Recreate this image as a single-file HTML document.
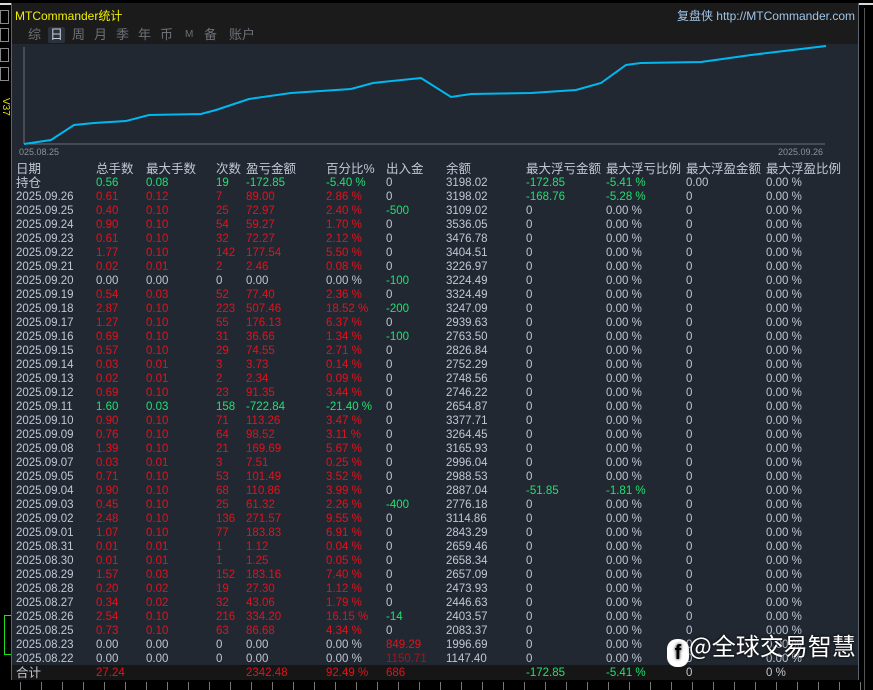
<!DOCTYPE html>
<html><head><meta charset="utf-8">
<style>
*{margin:0;padding:0;box-sizing:border-box}
body{width:873px;height:690px;background:#000;overflow:hidden;position:relative;font-family:"Liberation Sans","Noto Sans CJK SC",sans-serif}
.panel{position:absolute;left:11px;top:3px;width:848px;height:677px;background:#222831;border-left:1px solid #5a6470;border-right:1px solid #5a6470}
.hdr{position:absolute;left:0;top:0;width:100%;height:41px;background:#1b1b1b}
.title{position:absolute;left:3px;top:4px;color:#f0f000;font-size:12px}
.site{position:absolute;right:3px;top:4px;color:#9ec4e8;font-size:12px}
.tabs{position:absolute;top:24px;left:0;font-size:13px;color:#6c7078;white-space:nowrap;line-height:16px}
.tabs span{position:absolute;top:0;white-space:nowrap}
.sel{background:#2a323c;color:#c8ccd4;padding:0 2px;border-radius:2px}
.tbl{position:absolute;left:0;top:0}
.r{position:absolute;left:0;height:14px;line-height:14px;font-size:11.5px;white-space:nowrap;width:848px}
.r span{position:absolute;top:0;line-height:14px}
.g{color:#c0c8d6}.rd{color:#e3121c}.gr{color:#20e070}.dr{color:#b01018}
.h{font-size:12.5px;color:#c0c8d6}
.sum{position:absolute;left:0;top:662px;width:100%;height:15px;background:#161616}
.wm{position:absolute;left:667px;top:629px;color:#fff;font-size:24px;line-height:32px;white-space:nowrap;font-family:"Noto Sans CJK SC",sans-serif;text-shadow:0 0 3px #000}
</style></head><body>
<div style="position:absolute;left:0;top:3px;width:873px;height:2px;background:#d8d8d8"></div>
<div style="position:absolute;left:0;top:10px;width:9px;height:14px;border:1px solid #888"></div>
<div style="position:absolute;left:0;top:28px;width:9px;height:14px;border:1px solid #888"></div>
<div style="position:absolute;left:0;top:48px;width:9px;height:14px;border:1px solid #888"></div>
<div style="position:absolute;left:0;top:67px;width:9px;height:14px;border:1px solid #888"></div>
<div style="position:absolute;left:0;top:98px;color:#e8e000;font-size:10px;writing-mode:vertical-rl">V37</div>
<div style="position:absolute;left:4px;top:615px;width:7px;height:40px;border:1px solid #20e020;border-right:none"></div>
<div class="panel">
<div class="hdr">
<div class="title">MTCommander统计</div>
<div class="site">复盘侠 http://MTCommander.com</div>
<div class="tabs"><span style="left:16px">综</span><span class="sel" style="left:36px">日</span><span style="left:60px">周</span><span style="left:82px">月</span><span style="left:104px">季</span><span style="left:126px">年</span><span style="left:148px">币</span><span style="left:173px;font-size:10px">M</span><span style="left:192px">备</span><span style="left:217px">账户</span></div>
</div>
<svg style="position:absolute;left:0;top:0" width="848" height="160">
<line x1="12" y1="44" x2="12" y2="141" stroke="#6a7078" stroke-width="1"/>
<line x1="12" y1="141" x2="813" y2="141" stroke="#6a7078" stroke-width="1"/>
<polyline fill="none" stroke="#00b8f0" stroke-width="2" points="12,141 39,137 62,122 82,120 114,118 137,112 189,111 204,107 237,96 279,90 339,86 361,80 409,75 439,94 459,91 519,90 564,87 589,80 614,62 629,60 689,59 739,52 789,46 814,43"/>
<text x="7" y="152" fill="#8a929c" font-size="9" font-family="Liberation Sans">025.08.25</text>
<text x="766" y="152" fill="#8a929c" font-size="9" font-family="Liberation Sans">2025.09.26</text>
</svg>
<div class="sum"></div>
<div class="tbl">
<div class="r h" style="top:159px"><span style="left:4px">日期</span><span style="left:84px">总手数</span><span style="left:134px">最大手数</span><span style="left:204px">次数</span><span style="left:234px">盈亏金额</span><span style="left:314px">百分比%</span><span style="left:374px">出入金</span><span style="left:434px">余额</span><span style="left:514px">最大浮亏金额</span><span style="left:594px">最大浮亏比例</span><span style="left:674px">最大浮盈金额</span><span style="left:754px">最大浮盈比例</span></div>
<div class="r" style="top:173px"><span class="g h" style="left:4px">持仓</span><span class="gr" style="left:84px">0.56</span><span class="gr" style="left:134px">0.08</span><span class="gr" style="left:204px">19</span><span class="gr" style="left:234px">-172.85</span><span class="gr" style="left:314px">-5.40 %</span><span class="g" style="left:374px">0</span><span class="g" style="left:434px">3198.02</span><span class="gr" style="left:514px">-172.85</span><span class="gr" style="left:594px">-5.41 %</span><span class="g" style="left:674px">0.00</span><span class="g" style="left:754px">0.00 %</span></div>
<div class="r" style="top:187px"><span class="g" style="left:4px">2025.09.26</span><span class="rd" style="left:84px">0.61</span><span class="rd" style="left:134px">0.12</span><span class="rd" style="left:204px">7</span><span class="rd" style="left:234px">89.00</span><span class="rd" style="left:314px">2.86 %</span><span class="g" style="left:374px">0</span><span class="g" style="left:434px">3198.02</span><span class="gr" style="left:514px">-168.76</span><span class="gr" style="left:594px">-5.28 %</span><span class="g" style="left:674px">0</span><span class="g" style="left:754px">0.00 %</span></div>
<div class="r" style="top:201px"><span class="g" style="left:4px">2025.09.25</span><span class="rd" style="left:84px">0.40</span><span class="rd" style="left:134px">0.10</span><span class="rd" style="left:204px">25</span><span class="rd" style="left:234px">72.97</span><span class="rd" style="left:314px">2.40 %</span><span class="gr" style="left:374px">-500</span><span class="g" style="left:434px">3109.02</span><span class="g" style="left:514px">0</span><span class="g" style="left:594px">0.00 %</span><span class="g" style="left:674px">0</span><span class="g" style="left:754px">0.00 %</span></div>
<div class="r" style="top:215px"><span class="g" style="left:4px">2025.09.24</span><span class="rd" style="left:84px">0.90</span><span class="rd" style="left:134px">0.10</span><span class="rd" style="left:204px">54</span><span class="rd" style="left:234px">59.27</span><span class="rd" style="left:314px">1.70 %</span><span class="g" style="left:374px">0</span><span class="g" style="left:434px">3536.05</span><span class="g" style="left:514px">0</span><span class="g" style="left:594px">0.00 %</span><span class="g" style="left:674px">0</span><span class="g" style="left:754px">0.00 %</span></div>
<div class="r" style="top:229px"><span class="g" style="left:4px">2025.09.23</span><span class="rd" style="left:84px">0.61</span><span class="rd" style="left:134px">0.10</span><span class="rd" style="left:204px">32</span><span class="rd" style="left:234px">72.27</span><span class="rd" style="left:314px">2.12 %</span><span class="g" style="left:374px">0</span><span class="g" style="left:434px">3476.78</span><span class="g" style="left:514px">0</span><span class="g" style="left:594px">0.00 %</span><span class="g" style="left:674px">0</span><span class="g" style="left:754px">0.00 %</span></div>
<div class="r" style="top:243px"><span class="g" style="left:4px">2025.09.22</span><span class="rd" style="left:84px">1.77</span><span class="rd" style="left:134px">0.10</span><span class="rd" style="left:204px">142</span><span class="rd" style="left:234px">177.54</span><span class="rd" style="left:314px">5.50 %</span><span class="g" style="left:374px">0</span><span class="g" style="left:434px">3404.51</span><span class="g" style="left:514px">0</span><span class="g" style="left:594px">0.00 %</span><span class="g" style="left:674px">0</span><span class="g" style="left:754px">0.00 %</span></div>
<div class="r" style="top:257px"><span class="g" style="left:4px">2025.09.21</span><span class="rd" style="left:84px">0.02</span><span class="rd" style="left:134px">0.01</span><span class="rd" style="left:204px">2</span><span class="rd" style="left:234px">2.46</span><span class="rd" style="left:314px">0.08 %</span><span class="g" style="left:374px">0</span><span class="g" style="left:434px">3226.97</span><span class="g" style="left:514px">0</span><span class="g" style="left:594px">0.00 %</span><span class="g" style="left:674px">0</span><span class="g" style="left:754px">0.00 %</span></div>
<div class="r" style="top:271px"><span class="g" style="left:4px">2025.09.20</span><span class="g" style="left:84px">0.00</span><span class="g" style="left:134px">0.00</span><span class="g" style="left:204px">0</span><span class="g" style="left:234px">0.00</span><span class="g" style="left:314px">0.00 %</span><span class="gr" style="left:374px">-100</span><span class="g" style="left:434px">3224.49</span><span class="g" style="left:514px">0</span><span class="g" style="left:594px">0.00 %</span><span class="g" style="left:674px">0</span><span class="g" style="left:754px">0.00 %</span></div>
<div class="r" style="top:285px"><span class="g" style="left:4px">2025.09.19</span><span class="rd" style="left:84px">0.54</span><span class="rd" style="left:134px">0.03</span><span class="rd" style="left:204px">52</span><span class="rd" style="left:234px">77.40</span><span class="rd" style="left:314px">2.36 %</span><span class="g" style="left:374px">0</span><span class="g" style="left:434px">3324.49</span><span class="g" style="left:514px">0</span><span class="g" style="left:594px">0.00 %</span><span class="g" style="left:674px">0</span><span class="g" style="left:754px">0.00 %</span></div>
<div class="r" style="top:299px"><span class="g" style="left:4px">2025.09.18</span><span class="rd" style="left:84px">2.87</span><span class="rd" style="left:134px">0.10</span><span class="rd" style="left:204px">223</span><span class="rd" style="left:234px">507.46</span><span class="rd" style="left:314px">18.52 %</span><span class="gr" style="left:374px">-200</span><span class="g" style="left:434px">3247.09</span><span class="g" style="left:514px">0</span><span class="g" style="left:594px">0.00 %</span><span class="g" style="left:674px">0</span><span class="g" style="left:754px">0.00 %</span></div>
<div class="r" style="top:313px"><span class="g" style="left:4px">2025.09.17</span><span class="rd" style="left:84px">1.27</span><span class="rd" style="left:134px">0.10</span><span class="rd" style="left:204px">55</span><span class="rd" style="left:234px">176.13</span><span class="rd" style="left:314px">6.37 %</span><span class="g" style="left:374px">0</span><span class="g" style="left:434px">2939.63</span><span class="g" style="left:514px">0</span><span class="g" style="left:594px">0.00 %</span><span class="g" style="left:674px">0</span><span class="g" style="left:754px">0.00 %</span></div>
<div class="r" style="top:327px"><span class="g" style="left:4px">2025.09.16</span><span class="rd" style="left:84px">0.69</span><span class="rd" style="left:134px">0.10</span><span class="rd" style="left:204px">31</span><span class="rd" style="left:234px">36.66</span><span class="rd" style="left:314px">1.34 %</span><span class="gr" style="left:374px">-100</span><span class="g" style="left:434px">2763.50</span><span class="g" style="left:514px">0</span><span class="g" style="left:594px">0.00 %</span><span class="g" style="left:674px">0</span><span class="g" style="left:754px">0.00 %</span></div>
<div class="r" style="top:341px"><span class="g" style="left:4px">2025.09.15</span><span class="rd" style="left:84px">0.57</span><span class="rd" style="left:134px">0.10</span><span class="rd" style="left:204px">29</span><span class="rd" style="left:234px">74.55</span><span class="rd" style="left:314px">2.71 %</span><span class="g" style="left:374px">0</span><span class="g" style="left:434px">2826.84</span><span class="g" style="left:514px">0</span><span class="g" style="left:594px">0.00 %</span><span class="g" style="left:674px">0</span><span class="g" style="left:754px">0.00 %</span></div>
<div class="r" style="top:355px"><span class="g" style="left:4px">2025.09.14</span><span class="rd" style="left:84px">0.03</span><span class="rd" style="left:134px">0.01</span><span class="rd" style="left:204px">3</span><span class="rd" style="left:234px">3.73</span><span class="rd" style="left:314px">0.14 %</span><span class="g" style="left:374px">0</span><span class="g" style="left:434px">2752.29</span><span class="g" style="left:514px">0</span><span class="g" style="left:594px">0.00 %</span><span class="g" style="left:674px">0</span><span class="g" style="left:754px">0.00 %</span></div>
<div class="r" style="top:369px"><span class="g" style="left:4px">2025.09.13</span><span class="rd" style="left:84px">0.02</span><span class="rd" style="left:134px">0.01</span><span class="rd" style="left:204px">2</span><span class="rd" style="left:234px">2.34</span><span class="rd" style="left:314px">0.09 %</span><span class="g" style="left:374px">0</span><span class="g" style="left:434px">2748.56</span><span class="g" style="left:514px">0</span><span class="g" style="left:594px">0.00 %</span><span class="g" style="left:674px">0</span><span class="g" style="left:754px">0.00 %</span></div>
<div class="r" style="top:383px"><span class="g" style="left:4px">2025.09.12</span><span class="rd" style="left:84px">0.69</span><span class="rd" style="left:134px">0.10</span><span class="rd" style="left:204px">23</span><span class="rd" style="left:234px">91.35</span><span class="rd" style="left:314px">3.44 %</span><span class="g" style="left:374px">0</span><span class="g" style="left:434px">2746.22</span><span class="g" style="left:514px">0</span><span class="g" style="left:594px">0.00 %</span><span class="g" style="left:674px">0</span><span class="g" style="left:754px">0.00 %</span></div>
<div class="r" style="top:397px"><span class="g" style="left:4px">2025.09.11</span><span class="gr" style="left:84px">1.60</span><span class="gr" style="left:134px">0.03</span><span class="gr" style="left:204px">158</span><span class="gr" style="left:234px">-722.84</span><span class="gr" style="left:314px">-21.40 %</span><span class="g" style="left:374px">0</span><span class="g" style="left:434px">2654.87</span><span class="g" style="left:514px">0</span><span class="g" style="left:594px">0.00 %</span><span class="g" style="left:674px">0</span><span class="g" style="left:754px">0.00 %</span></div>
<div class="r" style="top:411px"><span class="g" style="left:4px">2025.09.10</span><span class="rd" style="left:84px">0.90</span><span class="rd" style="left:134px">0.10</span><span class="rd" style="left:204px">71</span><span class="rd" style="left:234px">113.26</span><span class="rd" style="left:314px">3.47 %</span><span class="g" style="left:374px">0</span><span class="g" style="left:434px">3377.71</span><span class="g" style="left:514px">0</span><span class="g" style="left:594px">0.00 %</span><span class="g" style="left:674px">0</span><span class="g" style="left:754px">0.00 %</span></div>
<div class="r" style="top:425px"><span class="g" style="left:4px">2025.09.09</span><span class="rd" style="left:84px">0.76</span><span class="rd" style="left:134px">0.10</span><span class="rd" style="left:204px">64</span><span class="rd" style="left:234px">98.52</span><span class="rd" style="left:314px">3.11 %</span><span class="g" style="left:374px">0</span><span class="g" style="left:434px">3264.45</span><span class="g" style="left:514px">0</span><span class="g" style="left:594px">0.00 %</span><span class="g" style="left:674px">0</span><span class="g" style="left:754px">0.00 %</span></div>
<div class="r" style="top:439px"><span class="g" style="left:4px">2025.09.08</span><span class="rd" style="left:84px">1.39</span><span class="rd" style="left:134px">0.10</span><span class="rd" style="left:204px">21</span><span class="rd" style="left:234px">169.69</span><span class="rd" style="left:314px">5.67 %</span><span class="g" style="left:374px">0</span><span class="g" style="left:434px">3165.93</span><span class="g" style="left:514px">0</span><span class="g" style="left:594px">0.00 %</span><span class="g" style="left:674px">0</span><span class="g" style="left:754px">0.00 %</span></div>
<div class="r" style="top:453px"><span class="g" style="left:4px">2025.09.07</span><span class="rd" style="left:84px">0.03</span><span class="rd" style="left:134px">0.01</span><span class="rd" style="left:204px">3</span><span class="rd" style="left:234px">7.51</span><span class="rd" style="left:314px">0.25 %</span><span class="g" style="left:374px">0</span><span class="g" style="left:434px">2996.04</span><span class="g" style="left:514px">0</span><span class="g" style="left:594px">0.00 %</span><span class="g" style="left:674px">0</span><span class="g" style="left:754px">0.00 %</span></div>
<div class="r" style="top:467px"><span class="g" style="left:4px">2025.09.05</span><span class="rd" style="left:84px">0.71</span><span class="rd" style="left:134px">0.10</span><span class="rd" style="left:204px">53</span><span class="rd" style="left:234px">101.49</span><span class="rd" style="left:314px">3.52 %</span><span class="g" style="left:374px">0</span><span class="g" style="left:434px">2988.53</span><span class="g" style="left:514px">0</span><span class="g" style="left:594px">0.00 %</span><span class="g" style="left:674px">0</span><span class="g" style="left:754px">0.00 %</span></div>
<div class="r" style="top:481px"><span class="g" style="left:4px">2025.09.04</span><span class="rd" style="left:84px">0.90</span><span class="rd" style="left:134px">0.10</span><span class="rd" style="left:204px">68</span><span class="rd" style="left:234px">110.86</span><span class="rd" style="left:314px">3.99 %</span><span class="g" style="left:374px">0</span><span class="g" style="left:434px">2887.04</span><span class="gr" style="left:514px">-51.85</span><span class="gr" style="left:594px">-1.81 %</span><span class="g" style="left:674px">0</span><span class="g" style="left:754px">0.00 %</span></div>
<div class="r" style="top:495px"><span class="g" style="left:4px">2025.09.03</span><span class="rd" style="left:84px">0.45</span><span class="rd" style="left:134px">0.10</span><span class="rd" style="left:204px">25</span><span class="rd" style="left:234px">61.32</span><span class="rd" style="left:314px">2.26 %</span><span class="gr" style="left:374px">-400</span><span class="g" style="left:434px">2776.18</span><span class="g" style="left:514px">0</span><span class="g" style="left:594px">0.00 %</span><span class="g" style="left:674px">0</span><span class="g" style="left:754px">0.00 %</span></div>
<div class="r" style="top:509px"><span class="g" style="left:4px">2025.09.02</span><span class="rd" style="left:84px">2.48</span><span class="rd" style="left:134px">0.10</span><span class="rd" style="left:204px">136</span><span class="rd" style="left:234px">271.57</span><span class="rd" style="left:314px">9.55 %</span><span class="g" style="left:374px">0</span><span class="g" style="left:434px">3114.86</span><span class="g" style="left:514px">0</span><span class="g" style="left:594px">0.00 %</span><span class="g" style="left:674px">0</span><span class="g" style="left:754px">0.00 %</span></div>
<div class="r" style="top:523px"><span class="g" style="left:4px">2025.09.01</span><span class="rd" style="left:84px">1.07</span><span class="rd" style="left:134px">0.10</span><span class="rd" style="left:204px">77</span><span class="rd" style="left:234px">183.83</span><span class="rd" style="left:314px">6.91 %</span><span class="g" style="left:374px">0</span><span class="g" style="left:434px">2843.29</span><span class="g" style="left:514px">0</span><span class="g" style="left:594px">0.00 %</span><span class="g" style="left:674px">0</span><span class="g" style="left:754px">0.00 %</span></div>
<div class="r" style="top:537px"><span class="g" style="left:4px">2025.08.31</span><span class="rd" style="left:84px">0.01</span><span class="rd" style="left:134px">0.01</span><span class="rd" style="left:204px">1</span><span class="rd" style="left:234px">1.12</span><span class="rd" style="left:314px">0.04 %</span><span class="g" style="left:374px">0</span><span class="g" style="left:434px">2659.46</span><span class="g" style="left:514px">0</span><span class="g" style="left:594px">0.00 %</span><span class="g" style="left:674px">0</span><span class="g" style="left:754px">0.00 %</span></div>
<div class="r" style="top:551px"><span class="g" style="left:4px">2025.08.30</span><span class="rd" style="left:84px">0.01</span><span class="rd" style="left:134px">0.01</span><span class="rd" style="left:204px">1</span><span class="rd" style="left:234px">1.25</span><span class="rd" style="left:314px">0.05 %</span><span class="g" style="left:374px">0</span><span class="g" style="left:434px">2658.34</span><span class="g" style="left:514px">0</span><span class="g" style="left:594px">0.00 %</span><span class="g" style="left:674px">0</span><span class="g" style="left:754px">0.00 %</span></div>
<div class="r" style="top:565px"><span class="g" style="left:4px">2025.08.29</span><span class="rd" style="left:84px">1.57</span><span class="rd" style="left:134px">0.03</span><span class="rd" style="left:204px">152</span><span class="rd" style="left:234px">183.16</span><span class="rd" style="left:314px">7.40 %</span><span class="g" style="left:374px">0</span><span class="g" style="left:434px">2657.09</span><span class="g" style="left:514px">0</span><span class="g" style="left:594px">0.00 %</span><span class="g" style="left:674px">0</span><span class="g" style="left:754px">0.00 %</span></div>
<div class="r" style="top:579px"><span class="g" style="left:4px">2025.08.28</span><span class="rd" style="left:84px">0.20</span><span class="rd" style="left:134px">0.02</span><span class="rd" style="left:204px">19</span><span class="rd" style="left:234px">27.30</span><span class="rd" style="left:314px">1.12 %</span><span class="g" style="left:374px">0</span><span class="g" style="left:434px">2473.93</span><span class="g" style="left:514px">0</span><span class="g" style="left:594px">0.00 %</span><span class="g" style="left:674px">0</span><span class="g" style="left:754px">0.00 %</span></div>
<div class="r" style="top:593px"><span class="g" style="left:4px">2025.08.27</span><span class="rd" style="left:84px">0.34</span><span class="rd" style="left:134px">0.02</span><span class="rd" style="left:204px">32</span><span class="rd" style="left:234px">43.06</span><span class="rd" style="left:314px">1.79 %</span><span class="g" style="left:374px">0</span><span class="g" style="left:434px">2446.63</span><span class="g" style="left:514px">0</span><span class="g" style="left:594px">0.00 %</span><span class="g" style="left:674px">0</span><span class="g" style="left:754px">0.00 %</span></div>
<div class="r" style="top:607px"><span class="g" style="left:4px">2025.08.26</span><span class="rd" style="left:84px">2.54</span><span class="rd" style="left:134px">0.10</span><span class="rd" style="left:204px">216</span><span class="rd" style="left:234px">334.20</span><span class="rd" style="left:314px">16.15 %</span><span class="gr" style="left:374px">-14</span><span class="g" style="left:434px">2403.57</span><span class="g" style="left:514px">0</span><span class="g" style="left:594px">0.00 %</span><span class="g" style="left:674px">0</span><span class="g" style="left:754px">0.00 %</span></div>
<div class="r" style="top:621px"><span class="g" style="left:4px">2025.08.25</span><span class="rd" style="left:84px">0.73</span><span class="rd" style="left:134px">0.10</span><span class="rd" style="left:204px">63</span><span class="rd" style="left:234px">86.68</span><span class="rd" style="left:314px">4.34 %</span><span class="g" style="left:374px">0</span><span class="g" style="left:434px">2083.37</span><span class="g" style="left:514px">0</span><span class="g" style="left:594px">0.00 %</span><span class="g" style="left:674px">0</span><span class="g" style="left:754px">0.00 %</span></div>
<div class="r" style="top:635px"><span class="g" style="left:4px">2025.08.23</span><span class="g" style="left:84px">0.00</span><span class="g" style="left:134px">0.00</span><span class="g" style="left:204px">0</span><span class="g" style="left:234px">0.00</span><span class="g" style="left:314px">0.00 %</span><span class="rd" style="left:374px">849.29</span><span class="g" style="left:434px">1996.69</span><span class="g" style="left:514px">0</span><span class="g" style="left:594px">0.00 %</span><span class="g" style="left:674px">0</span><span class="g" style="left:754px">0.00 %</span></div>
<div class="r" style="top:649px"><span class="g" style="left:4px">2025.08.22</span><span class="g" style="left:84px">0.00</span><span class="g" style="left:134px">0.00</span><span class="g" style="left:204px">0</span><span class="g" style="left:234px">0.00</span><span class="g" style="left:314px">0.00 %</span><span class="dr" style="left:374px">1150.71</span><span class="g" style="left:434px">1147.40</span><span class="g" style="left:514px">0</span><span class="g" style="left:594px">0.00 %</span><span class="g" style="left:674px">0</span><span class="g" style="left:754px">0.00 %</span></div>
<div class="r" style="top:663px"><span class="g h" style="left:4px">合计</span><span class="rd" style="left:84px">27.24</span><span class="rd" style="left:234px">2342.48</span><span class="rd" style="left:314px">92.49 %</span><span class="rd" style="left:374px">686</span><span class="gr" style="left:514px">-172.85</span><span class="gr" style="left:594px">-5.41 %</span><span class="g" style="left:674px">0</span><span class="g" style="left:754px">0 %</span></div>
</div>
</div>
<div class="wm"><span style="display:inline-block;width:22px;height:28px;background:#fff;color:#000;border-radius:10px;text-align:center;font-weight:bold;font-size:20px;line-height:28px;vertical-align:-4px;font-family:'Liberation Sans'">f</span>@全球交易智慧</div>
<div style="position:absolute;left:864px;top:8px;width:1px;height:682px;background:#555"></div>
<div style="position:absolute;left:0;top:682px;width:873px;height:8px;background:repeating-linear-gradient(90deg,transparent 0 20px,#777 20px 21px)"></div>
</body></html>
